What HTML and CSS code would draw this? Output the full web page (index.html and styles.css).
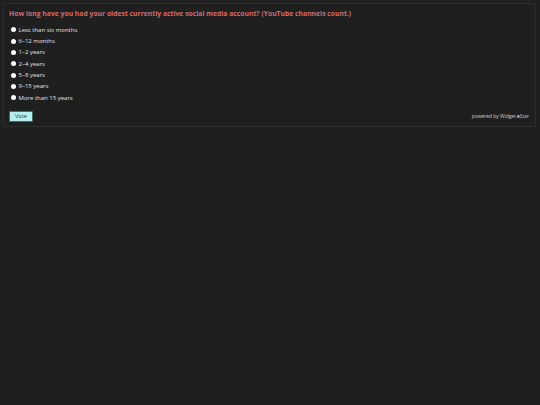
FILE: index.html
```html
<!DOCTYPE html>
<html lang="en">
<head>
    <meta charset="UTF-8">
    <title>Poll</title>
    <link rel="stylesheet" href="styles.css">
</head>
<body>
    <section class="poll">
        <h1 class="question">How long have you had your oldest currently active social media account? (YouTube channels count.)</h1>
        <ul class="answers">
            <li><span class="dot"></span>Less than six months</li>
            <li><span class="dot"></span>6–12 months</li>
            <li><span class="dot"></span>1–2 years</li>
            <li><span class="dot"></span>2–4 years</li>
            <li><span class="dot"></span>5–8 years</li>
            <li><span class="dot"></span>9–15 years</li>
            <li><span class="dot"></span>More than 15 years</li>
        </ul>
        <div class="footer">
            <button class="vote">Vote</button>
            <span class="powered">powered by Widget&#9733;Star</span>
        </div>
    </section>
</body>
</html>
```

FILE: styles.css
```css
body{
    margin: 0;
    background-color: #1f1f1f;
    font-family: "Open Sans", "Noto Sans", sans-serif;
}
.poll{
    margin: 3px 4px 3px 3px;
    border: 1px solid #2c2c2c;
    padding: 5px 5px 4px 5px;
}
.question{
    margin: 0 0 5px 0;
    font-size: 6.8px;
    line-height: 10px;
    font-weight: bold;
    color: #d46a6a;
}
.answers{
    list-style: none;
    margin: 0;
    padding: 0;
}
.answers li{
    display: flex;
    align-items: center;
    height: 11.35px;
    font-size: 6px;
    color: #e2e2e2;
}
.dot{
    width: 5px;
    height: 5px;
    border-radius: 50%;
    background-color: #ffffff;
    margin: 0 2.5px 0 2px;
}
.footer{
    display: flex;
    justify-content: space-between;
    align-items: flex-end;
    margin-top: 8px;
}
.vote{
    font-family: inherit;
    font-size: 5.6px;
    color: #333;
    background-color: #b4efef;
    border: 1px solid #4a6a6a;
    border-radius: 1px;
    padding: 1px 5px;
    height: 11px;
    line-height: 7px;
}
.powered{
    font-size: 4.9px;
    color: #cccccc;
    margin-right: 1px;
    margin-bottom: 3px;
}
```
